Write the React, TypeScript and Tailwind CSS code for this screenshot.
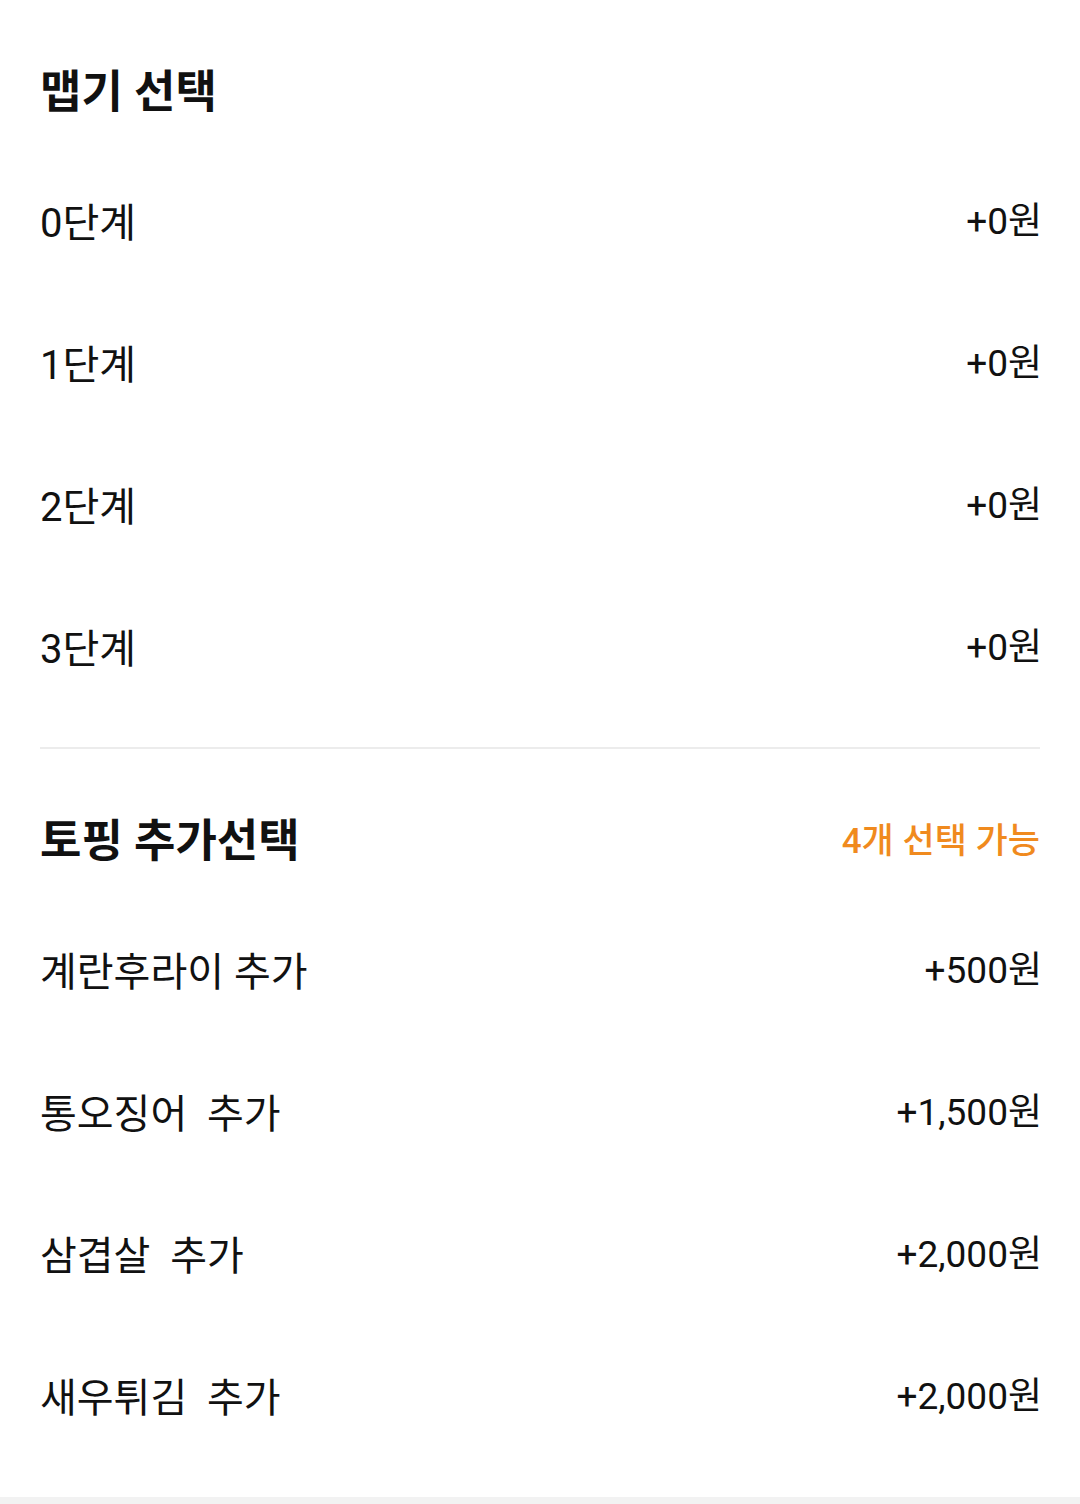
const spicy = [
  { name: "0단계", price: "+0원" },
  { name: "1단계", price: "+0원" },
  { name: "2단계", price: "+0원" },
  { name: "3단계", price: "+0원" },
];

const toppings = [
  { name: "계란후라이 추가", price: "+500원" },
  { name: "통오징어  추가", price: "+1,500원" },
  { name: "삼겹살  추가", price: "+2,000원" },
  { name: "새우튀김  추가", price: "+2,000원" },
];

function OptionRow({ name, price }: { name: string; price: string }) {
  return (
    <div className="flex h-[142px] items-center justify-between">
      <span className="mt-[4px] whitespace-pre text-[40px] leading-none text-[#111]">{name}</span>
      <span className="-mr-[2px] -mt-[2px] text-[37px] leading-none text-[#111]">{price}</span>
    </div>
  );
}

export default function App() {
  return (
    <div
      className="min-h-[1504px] bg-[#f2f2f2]"
      style={{ fontFamily: '"Roboto", "Noto Sans CJK KR", sans-serif' }}
    >
      <div className="bg-white px-[40px]">
        <section className="pb-[28px]">
          <div className="flex h-[151px] items-center">
            <h2 className="mt-[34px] text-[45px] font-bold leading-none text-[#111]">맵기 선택</h2>
          </div>
          {spicy.map((o) => (
            <OptionRow key={o.name} {...o} />
          ))}
        </section>
        <div className="h-[2px] bg-[#ececec]" />
        <section className="pb-[29px]">
          <div className="flex h-[151px] items-center justify-between">
            <h2 className="mt-[34px] text-[45px] font-bold leading-none text-[#111]">토핑 추가선택</h2>
            <span className="mt-[34px] text-[35px] font-medium leading-none text-[#f08a1e]">
              4개 선택 가능
            </span>
          </div>
          {toppings.map((o) => (
            <OptionRow key={o.name} {...o} />
          ))}
        </section>
      </div>
    </div>
  );
}
